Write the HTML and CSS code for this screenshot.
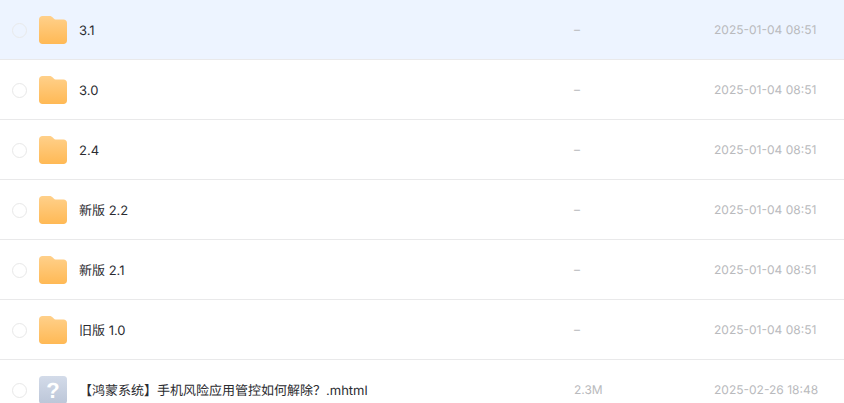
FILE: index.html
```html
<!DOCTYPE html>
<html lang="zh-CN">
<head>
<meta charset="utf-8">
<title>文件列表</title>
<link rel="stylesheet" href="styles.css">
</head>
<body>
<svg class="defs" width="0" height="0" aria-hidden="true">
  <defs>
    <linearGradient id="fg" x1="0" y1="0" x2="0" y2="1">
      <stop offset="0" stop-color="#ffd08a"/>
      <stop offset="1" stop-color="#ffb955"/>
    </linearGradient>
    <linearGradient id="qg" x1="0" y1="0" x2="0" y2="1">
      <stop offset="0" stop-color="#d3dbe9"/>
      <stop offset="1" stop-color="#bcc6d8"/>
    </linearGradient>
    <symbol id="folder" viewBox="0 0 28 28">
      <path fill="url(#fg)" d="M3.5 0H10.6C12 0 12.9.6 13.8 1.5L15 2.8C15.4 3.2 15.8 3.4 16.5 3.4H24.5C26.5 3.4 28 4.9 28 6.9V24.5C28 26.5 26.5 28 24.5 28H3.5C1.5 28 0 26.5 0 24.5V3.5C0 1.5 1.5 0 3.5 0Z"/>
    </symbol>
  </defs>
</svg>
<main class="list">
  <div class="row active"><span class="radio"></span><svg class="icon"><use href="#folder"/></svg><span class="name">3.1</span><span class="size">–</span><span class="date">2025-01-04 08:51</span></div>
  <div class="row"><span class="radio"></span><svg class="icon"><use href="#folder"/></svg><span class="name">3.0</span><span class="size">–</span><span class="date">2025-01-04 08:51</span></div>
  <div class="row"><span class="radio"></span><svg class="icon"><use href="#folder"/></svg><span class="name">2.4</span><span class="size">–</span><span class="date">2025-01-04 08:51</span></div>
  <div class="row"><span class="radio"></span><svg class="icon"><use href="#folder"/></svg><span class="name">新版 2.2</span><span class="size">–</span><span class="date">2025-01-04 08:51</span></div>
  <div class="row"><span class="radio"></span><svg class="icon"><use href="#folder"/></svg><span class="name">新版 2.1</span><span class="size">–</span><span class="date">2025-01-04 08:51</span></div>
  <div class="row"><span class="radio"></span><svg class="icon"><use href="#folder"/></svg><span class="name">旧版 1.0</span><span class="size">–</span><span class="date">2025-01-04 08:51</span></div>
  <div class="row"><span class="radio"></span><svg class="icon" viewBox="0 0 28 28"><rect width="28" height="28" rx="3.5" fill="url(#qg)"/><text class="q" x="14" y="22" text-anchor="middle">?</text></svg><span class="name">【鸿蒙系统】手机风险应用管控如何解除？.mhtml</span><span class="size">2.3M</span><span class="date">2025-02-26 18:48</span></div>
</main>
</body>
</html>
```
FILE: styles.css
```css
html, body {
  margin: 0;
  padding: 0;
  height: 403px;
  overflow: hidden;
  background: #fff;
}
body {
  font-family: Inter, "Noto Sans CJK SC", sans-serif;
  font-size: 13px;
  line-height: 20px;
  color: #2b2c31;
  text-rendering: geometricPrecision;
}
.defs {
  display: block;
  height: 0;
}
.list {
  display: flex;
  flex-direction: column;
}
.row {
  display: flex;
  align-items: center;
  flex: none;
  height: 60px;
  box-sizing: border-box;
  border-bottom: 1px solid #e9e9ea;
  padding: 1px 0 0 12px;
}
.row.active {
  background: #edf4ff;
}
.radio {
  flex: none;
  width: 15px;
  height: 15px;
  box-sizing: border-box;
  border: 1px solid #e8e8e8;
  border-radius: 50%;
  margin-right: 12px;
}
.active .radio {
  border-color: #e9eaea;
}
.icon {
  flex: none;
  width: 28px;
  height: 28px;
  margin-right: 12px;
}
.q {
  font-family: "Liberation Sans", sans-serif;
  font-size: 22px;
  font-weight: 700;
  fill: #fff;
}
.name {
  flex: none;
  width: 495px;
  padding-top: 2px;
}
.size {
  flex: none;
  width: 140px;
  font-size: 12px;
  color: #b9babd;
}
.date {
  flex: none;
  font-size: 12px;
  color: #b9babd;
}
```
